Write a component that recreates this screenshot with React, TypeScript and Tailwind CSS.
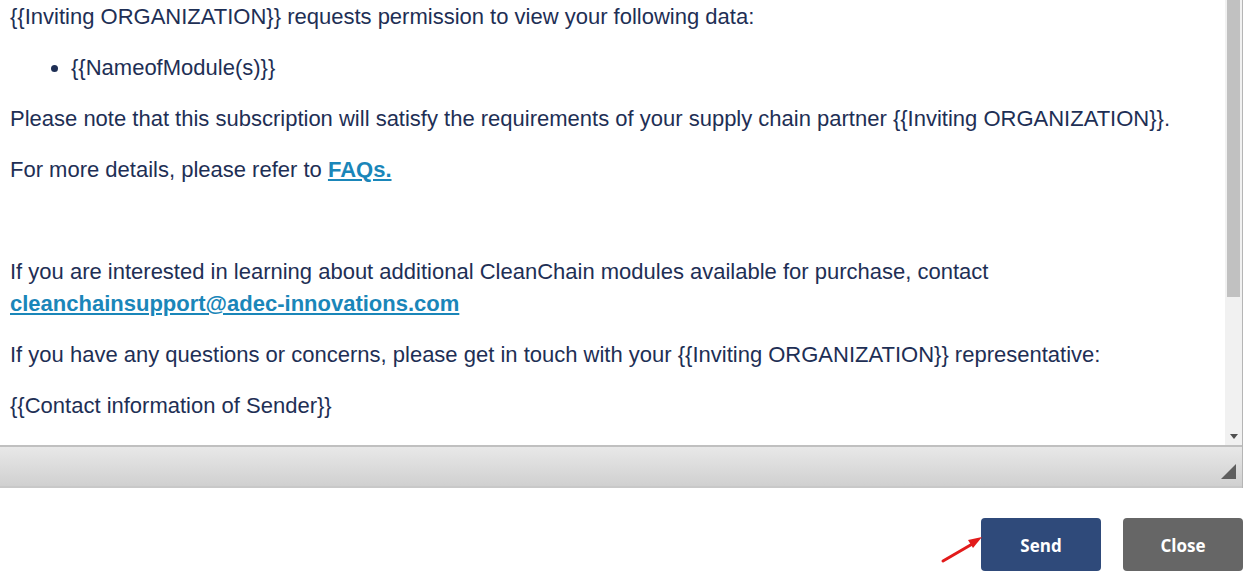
export default function App() {
  const p = 'mb-[19px]';
  return (
    <div className="relative w-[1257px] h-[583px] overflow-hidden bg-white font-['Liberation_Sans',Arial,sans-serif]">
      {/* Editor */}
      <div className="w-[1243px] border-r border-[#b5b5b5]">
        <div className="flex h-[445px]">
          <div className="flex-1 overflow-hidden pl-[10px] text-[22px] leading-[32px] text-[#1e2f55]">
            <div className="mt-px">
              <p className={p}>{'{{Inviting ORGANIZATION}} requests permission to view your following data:'}</p>
              <ul className={`list-disc pl-[61px] ${p}`}>
                <li>{'{{NameofModule(s)}}'}</li>
              </ul>
              <p className={p}>
                {'Please note that this subscription will satisfy the requirements of your supply chain partner {{Inviting ORGANIZATION}}.'}
              </p>
              <p className={p}>
                For more details, please refer to{' '}
                <a className="font-bold text-[#1a86b9] underline">FAQs.</a>
              </p>
              <p className={`${p} h-[32px]`}>&nbsp;</p>
              <p className={p}>
                If you are interested in learning about additional CleanChain modules available for purchase, contact
                <br />
                <a className="font-bold text-[#1a86b9] underline">cleanchainsupport@adec-innovations.com</a>
              </p>
              <p className={p}>
                {'If you have any questions or concerns, please get in touch with your {{Inviting ORGANIZATION}} representative:'}
              </p>
              <p className={p}>{'{{Contact information of Sender}}'}</p>
            </div>
          </div>
          {/* Scrollbar */}
          <div className="w-[17px] bg-[#f1f1f1] flex flex-col">
            <div className="mx-[2px] h-[297px] bg-[#c1c1c1]" />
            <div className="flex-1" />
            <div className="h-[17px] flex items-center justify-center">
              <svg width="8" height="5" viewBox="0 0 8 5">
                <path d="M0 0h8L4 5z" fill="#505050" />
              </svg>
            </div>
          </div>
        </div>
        {/* Bottom bar */}
        <div className="relative h-[43px] border-t-2 border-[#c0c0c0] border-b-2 border-b-[#c8c8c8] bg-gradient-to-b from-[#e8e8e8] to-[#d0d0d0]">
          <svg className="absolute right-[6px] bottom-[7px]" width="15" height="15" viewBox="0 0 15 15">
            <path d="M15 0V15H0z" fill="#5e5e5e" />
          </svg>
        </div>
      </div>

      {/* Buttons */}
      <div className="flex justify-end gap-[22px] pr-[14px] pt-[30px] font-['Open_Sans',sans-serif]">
        <button className="w-[120px] h-[53px] pt-[3px] rounded-[4px] bg-[#2f4a7a] text-white text-[17px] font-bold">Send</button>
        <button className="w-[120px] h-[53px] pt-[3px] rounded-[4px] bg-[#666666] text-white text-[17px] font-bold">Close</button>
      </div>

      {/* Annotation arrow */}
      <svg className="absolute left-[938px] top-[532px]" width="48" height="34" viewBox="0 0 48 34">
        <path d="M5 29L36 11" stroke="#e21b1b" strokeWidth="3" strokeLinecap="round" />
        <path d="M44 5L30 8L35 16z" fill="#e21b1b" />
      </svg>
    </div>
  );
}
